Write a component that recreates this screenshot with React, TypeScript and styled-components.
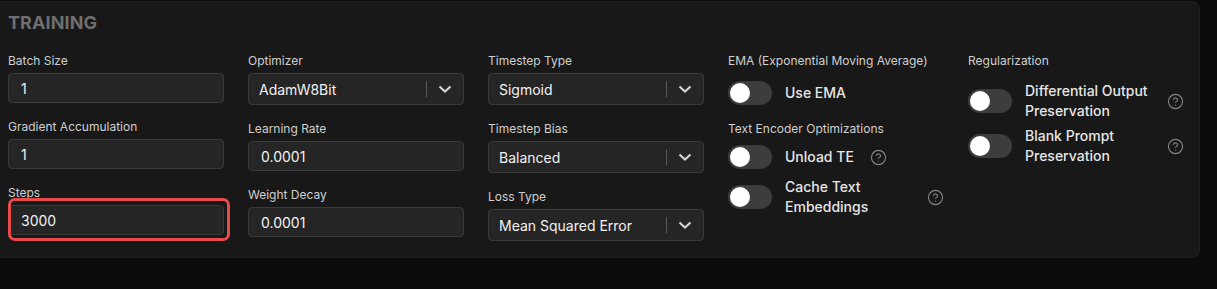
import styled, { createGlobalStyle } from "styled-components";
import { CircleHelp } from "lucide-react";

const GlobalStyle = createGlobalStyle`
  html, body {
    margin: 0;
    background: #0b0b0b;
    font-family: Inter, "Noto Sans", sans-serif;
    -webkit-font-smoothing: antialiased;
  }
  * {
    box-sizing: border-box;
  }
`;

const Panel = styled.section`
  margin: 1px 17px 0 -8px;
  padding: 9px 15px 16px;
  background: #181818;
  border: 1px solid #202020;
  border-radius: 8px;
`;

const Heading = styled.h2`
  margin: 0;
  font-size: 18px;
  line-height: 24px;
  font-weight: 700;
  color: #6e6e6e;
  letter-spacing: 0.1px;
`;

const Grid = styled.div`
  margin-top: 18px;
  display: grid;
  grid-template-columns: repeat(5, 216px);
  column-gap: 24px;
  align-items: start;
`;

const Column = styled.div`
  display: flex;
  flex-direction: column;
  gap: 16px;
`;

const Field = styled.div`
  position: relative;
  display: flex;
  flex-direction: column;
`;

const Label = styled.label<{ $mb?: number }>`
  font-size: 12px;
  line-height: 16px;
  color: #cfcfcf;
  margin-bottom: ${(p) => p.$mb ?? 4}px;
`;

const Input = styled.input`
  height: 30px;
  width: 100%;
  padding: 0 12px;
  background: #252525;
  border: 1px solid #3a3a3a;
  border-radius: 4px;
  color: #f2f2f2;
  font-family: inherit;
  font-size: 14px;
  outline: none;
`;

const Highlight = styled.div`
  position: absolute;
  left: 0;
  top: 13px;
  right: -6px;
  bottom: -6px;
  border: 3px solid #e94a4a;
  border-radius: 7px;
  pointer-events: none;
`;

const SelectBox = styled.div`
  height: 32px;
  display: flex;
  align-items: center;
  background: #252525;
  border: 1px solid #3a3a3a;
  border-radius: 4px;
  color: #f2f2f2;
  font-size: 14px;
`;

const SelectValue = styled.span`
  flex: 1;
  padding-left: 10px;
`;

const Separator = styled.span`
  width: 1px;
  height: 16px;
  background: #575757;
  margin-right: 11px;
`;

const Chevron = styled.svg`
  width: 14px;
  height: 8px;
  margin-right: 11px;
`;

const Section = styled.div`
  display: flex;
  flex-direction: column;
`;

const ToggleList = styled.div<{ $gap: number }>`
  display: flex;
  flex-direction: column;
  gap: ${(p) => p.$gap}px;
`;

const ToggleRow = styled.div`
  display: flex;
  align-items: center;
`;

const Track = styled.span`
  flex: none;
  width: 44px;
  height: 24px;
  border-radius: 12px;
  background: #3d3d3d;
  padding: 2px;
  display: flex;
  align-items: center;
`;

const Knob = styled.span`
  width: 20px;
  height: 20px;
  border-radius: 50%;
  background: #ffffff;
`;

const ToggleText = styled.span`
  margin-left: 13px;
  font-size: 14px;
  line-height: 20px;
  font-weight: 500;
  color: #e6e6e6;
`;

const Help = styled(CircleHelp)`
  flex: none;
  margin-left: 16px;
  color: #858585;
`;

const TextField = ({ label, value, highlight }: { label: string; value: string; highlight?: boolean }) => (
  <Field>
    <Label>{label}</Label>
    <Input defaultValue={value} />
    {highlight && <Highlight />}
  </Field>
);

const SelectField = ({ label, value }: { label: string; value: string }) => (
  <Field>
    <Label>{label}</Label>
    <SelectBox>
      <SelectValue>{value}</SelectValue>
      <Separator />
      <Chevron viewBox="0 0 14 8">
        <polyline points="1.5,1.5 7,6.5 12.5,1.5" fill="none" stroke="#d4d4d4" strokeWidth="2.2" />
      </Chevron>
    </SelectBox>
  </Field>
);

const Toggle = ({ text, help }: { text: string; help?: boolean }) => (
  <ToggleRow>
    <Track>
      <Knob />
    </Track>
    <ToggleText>{text}</ToggleText>
    {help && <Help size={17} strokeWidth={1.6} />}
  </ToggleRow>
);

const App = () => {
  return (
    <>
      <GlobalStyle />
      <Panel>
        <Heading>TRAINING</Heading>
        <Grid>
          <Column>
            <TextField label="Batch Size" value="1" />
            <TextField label="Gradient Accumulation" value="1" />
            <TextField label="Steps" value="3000" highlight />
          </Column>
          <Column>
            <SelectField label="Optimizer" value="AdamW8Bit" />
            <TextField label="Learning Rate" value="0.0001" />
            <TextField label="Weight Decay" value="0.0001" />
          </Column>
          <Column>
            <SelectField label="Timestep Type" value="Sigmoid" />
            <SelectField label="Timestep Bias" value="Balanced" />
            <SelectField label="Loss Type" value="Mean Squared Error" />
          </Column>
          <Column>
            <Section>
              <Label $mb={12}>EMA (Exponential Moving Average)</Label>
              <Toggle text="Use EMA" />
            </Section>
            <Section>
              <Label $mb={8}>Text Encoder Optimizations</Label>
              <ToggleList $gap={8}>
                <Toggle text="Unload TE" help />
                <Toggle text="Cache Text Embeddings" help />
              </ToggleList>
            </Section>
          </Column>
          <Column>
            <Section>
              <Label $mb={12}>Regularization</Label>
              <ToggleList $gap={5}>
                <Toggle text="Differential Output Preservation" help />
                <Toggle text="Blank Prompt Preservation" help />
              </ToggleList>
            </Section>
          </Column>
        </Grid>
      </Panel>
    </>
  );
};

export default App;
